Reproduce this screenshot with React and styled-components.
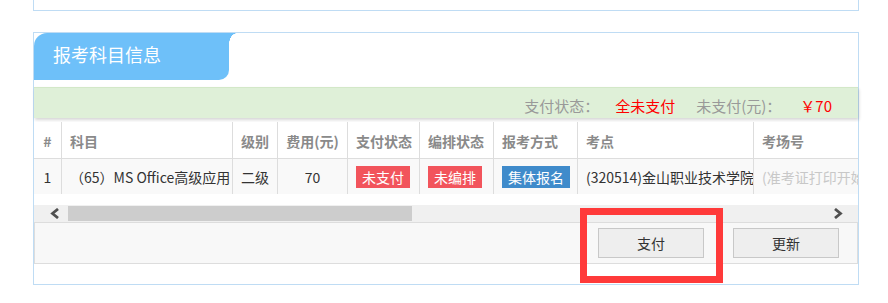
import React from "react";
import styled, { createGlobalStyle } from "styled-components";

const GlobalStyle = createGlobalStyle`
  html, body { margin: 0; padding: 0; background: #fff; }
  body {
    font-family: "Noto Sans CJK SC", "Noto Sans", sans-serif;
    color: #333;
  }
  * { box-sizing: border-box; }
`;

const BORDER_BLUE = "#bfdcf4";
const TAB_BLUE = "#6ec0f9";
const COLS = "28px 171px 45px 70px 72px 74px 84px 176px 180px";

const Page = styled.div`
  width: 888px;
  height: 303px;
  overflow: hidden;
  padding-left: 33px;
`;

const TopPanel = styled.div`
  width: 826px;
  height: 11px;
  border: 1px solid ${BORDER_BLUE};
  border-top: none;
`;

const Panel = styled.section`
  width: 826px;
  margin-top: 21px;
  border: 1px solid ${BORDER_BLUE};
  padding-bottom: 20px;
`;

const TabRow = styled.div`
  height: 48px;
  display: flex;
`;

const Tab = styled.div`
  position: relative;
  width: 195px;
  height: 47px;
  background: ${TAB_BLUE};
  border-top-left-radius: 13px;
  border-bottom-right-radius: 10px;
  color: #fff;
  font-size: 18px;
  line-height: 43px;
  padding-left: 19px;
  &::after {
    content: "";
    position: absolute;
    top: 0;
    right: -8px;
    width: 8px;
    height: 11px;
    background: radial-gradient(ellipse 8px 11px at 100% 100%, transparent 96%, ${TAB_BLUE} 100%);
  }
`;

const SummaryBar = styled.div`
  margin-top: 6px;
  height: 31px;
  background: #dff0d8;
  border-top: 1px solid #d3e8c8;
  box-shadow: 1px 2px 3px rgba(0, 0, 0, 0.16);
  display: flex;
  justify-content: flex-end;
  align-items: center;
  padding: 4px 26px 0 0;
  font-size: 15px;
  white-space: nowrap;
`;

const SumLabel = styled.span`
  color: #999;
  margin-left: ${(p) => p.$gap || 0}px;
`;

const SumValue = styled.span`
  color: #f00;
  margin-left: ${(p) => p.$gap || 0}px;
`;

const TableViewport = styled.div`
  margin-top: 4px;
  width: 824px;
  overflow: hidden;
`;

const Row = styled.div`
  display: grid;
  grid-template-columns: ${COLS};
  width: 900px;
  height: ${(p) => (p.$head ? 37 : 35)}px;
  background: ${(p) => (p.$head ? "#fff" : "#f9f9f9")};
  border-bottom: ${(p) => (p.$head ? "1px solid #ddd" : "none")};
`;

const Cell = styled.div`
  display: flex;
  align-items: center;
  justify-content: ${(p) => (p.$align === "center" ? "center" : "flex-start")};
  padding: 0 ${(p) => (p.$align === "center" ? 0 : 8)}px;
  border-right: ${(p) => (p.$last ? "none" : "1px solid #ddd")};
  font-size: 14px;
  white-space: nowrap;
  overflow: hidden;
  color: ${(p) => (p.$muted ? "#c8c8c8" : "#333")};
`;

const HeadCell = styled(Cell)`
  color: #8a8a8a;
  font-weight: bold;
  padding-top: 1px;
`;

const Badge = styled.span`
  display: inline-flex;
  align-items: center;
  height: 22px;
  padding: 0 6px;
  color: #fff;
  font-size: 14px;
  background: ${(p) => (p.$tone === "blue" ? "#3f8bcb" : "#f2545c")};
`;

const ScrollBar = styled.div`
  margin-top: 11px;
  height: 17px;
  background: #f0f0f0;
  display: flex;
  align-items: stretch;
`;

const ArrowCell = styled.div`
  width: ${(p) => p.$w}px;
  padding-left: ${(p) => p.$pl}px;
  display: flex;
  align-items: center;
`;

const Track = styled.div`
  flex: 1;
  display: flex;
  align-items: center;
`;

const Thumb = styled.div`
  height: 15px;
  background: #cdcdcd;
`;

const ButtonBar = styled.div`
  height: 42px;
  border: 1px solid #ddd;
  background: #f8f8f8;
  display: flex;
  justify-content: flex-end;
  align-items: center;
  gap: 29px;
  padding-right: 18px;
`;

const Highlight = styled.div`
  position: relative;
  display: flex;
  &::after {
    content: "";
    position: absolute;
    top: -20px;
    left: -18px;
    right: -19px;
    bottom: -25px;
    border: 7px solid #ff3a3a;
    pointer-events: none;
  }
`;

const Button = styled.button`
  width: 106px;
  height: 30px;
  border: 1px solid #c8c8c8;
  background: #eee;
  color: #333;
  font-family: inherit;
  font-size: 14px;
  padding: 0;
  cursor: pointer;
`;

const Chevron = ({ dir }) => (
  <svg width="10" height="11" viewBox="0 0 10 11">
    <polyline
      points={dir === "left" ? "8,1 2.5,5.5 8,10" : "2,1 7.5,5.5 2,10"}
      fill="none"
      stroke="#505050"
      strokeWidth="2.8"
    />
  </svg>
);

const headers = [
  { t: "#", a: "center" },
  { t: "科目" },
  { t: "级别" },
  { t: "费用(元)", a: "center" },
  { t: "支付状态" },
  { t: "编排状态" },
  { t: "报考方式" },
  { t: "考点" },
  { t: "考场号", last: true },
];

export default function App() {
  const thumbWidth = 344;
  return (
    <>
      <GlobalStyle />
      <Page>
        <TopPanel />
        <Panel>
          <TabRow>
            <Tab>报考科目信息</Tab>
          </TabRow>
          <SummaryBar>
            <SumLabel>支付状态：</SumLabel>
            <SumValue $gap={16}>全未支付</SumValue>
            <SumLabel $gap={21}>未支付(元)：</SumLabel>
            <SumValue $gap={19}>￥70</SumValue>
          </SummaryBar>
          <TableViewport>
            <Row $head>
              {headers.map((h) => (
                <HeadCell key={h.t} $align={h.a} $last={h.last}>
                  {h.t}
                </HeadCell>
              ))}
            </Row>
            <Row>
              <Cell $align="center">1</Cell>
              <Cell>（65）MS Office高级应用</Cell>
              <Cell>二级</Cell>
              <Cell $align="center">70</Cell>
              <Cell>
                <Badge>未支付</Badge>
              </Cell>
              <Cell>
                <Badge>未编排</Badge>
              </Cell>
              <Cell>
                <Badge $tone="blue">集体报名</Badge>
              </Cell>
              <Cell>(320514)金山职业技术学院</Cell>
              <Cell $muted $last>
                (准考证打印开始后显示)
              </Cell>
            </Row>
          </TableViewport>
          <ScrollBar>
            <ArrowCell $w={34} $pl={16}>
              <Chevron dir="left" />
            </ArrowCell>
            <Track>
              <Thumb style={{ width: thumbWidth }} />
            </Track>
            <ArrowCell $w={29} $pl={4}>
              <Chevron dir="right" />
            </ArrowCell>
          </ScrollBar>
          <ButtonBar>
            <Highlight>
              <Button>支付</Button>
            </Highlight>
            <Button>更新</Button>
          </ButtonBar>
        </Panel>
      </Page>
    </>
  );
}
